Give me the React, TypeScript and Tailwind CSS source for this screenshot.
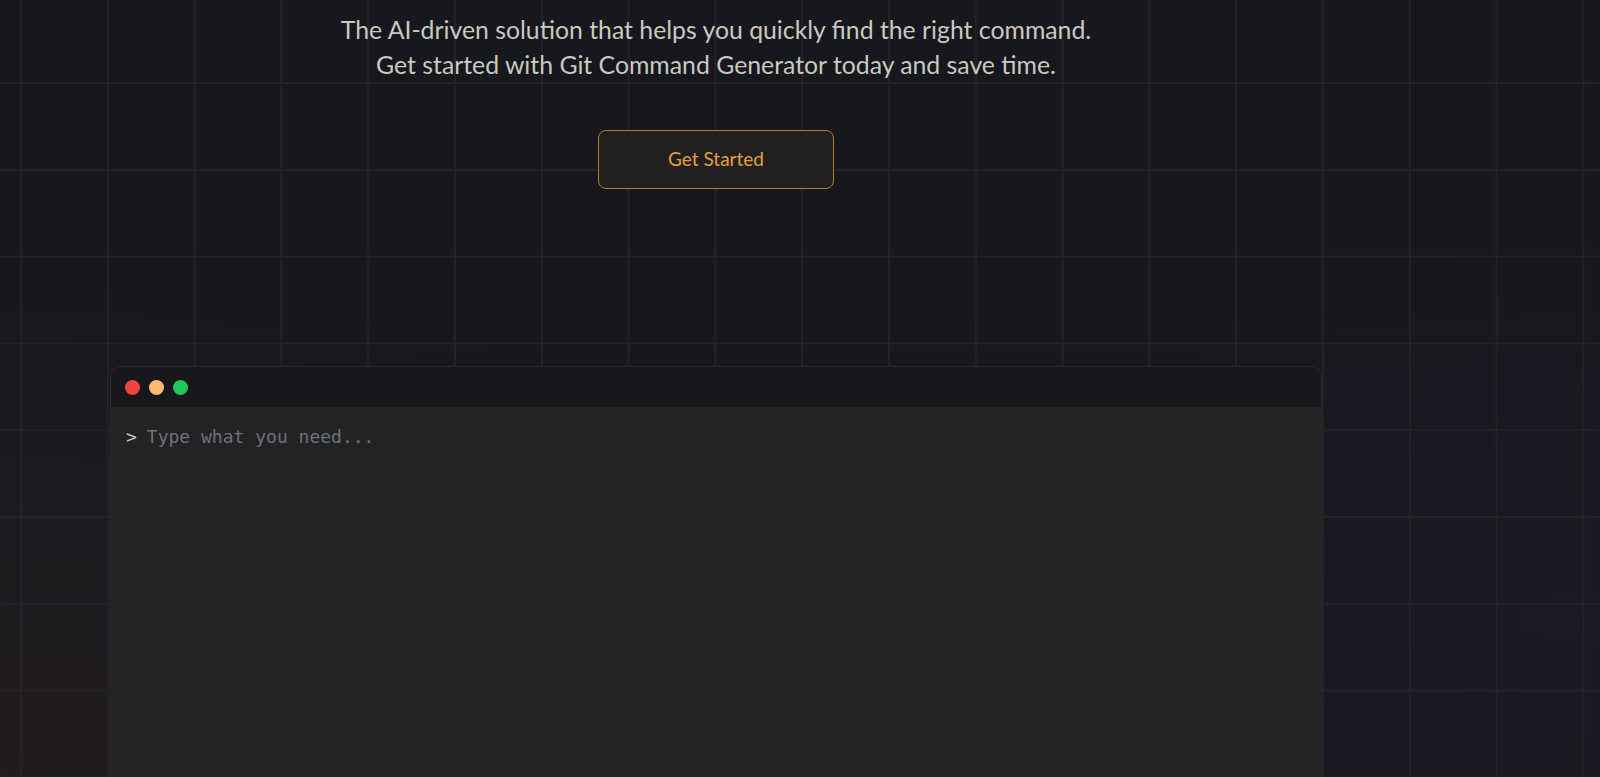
const App = () => {
  return (
    <div className="min-h-screen h-[777px] overflow-hidden bg-[#17181d] bg-[linear-gradient(to_right,#222227_2px,transparent_2px),linear-gradient(to_bottom,#222227_2px,transparent_2px),radial-gradient(ellipse_at_0%_100%,rgba(55,38,32,0.3),transparent_45%),radial-gradient(ellipse_at_100%_80%,rgba(30,35,60,0.22),transparent_45%)] bg-[size:86.8px_86.8px,86.8px_86.8px,100%_100%,100%_100%] bg-[position:20px_82px,20px_82px,0_0,0_0]">
      <div className="ml-[110px] w-[1212px] flex flex-col items-center pt-[12px]">
        <p className="text-center text-[24.8px] leading-[35px] text-[#cac8bf] font-['Lato','Liberation_Sans',sans-serif]">
          The AI-driven solution that helps you quickly find the right command.
          <br />
          Get started with Git Command Generator today and save time.
        </p>

        <button className="mt-[48px] w-[236px] h-[59px] rounded-lg border border-[#b07d2a] bg-[#211f1f] text-[19px] text-[#e5a03a] font-['Lato','Liberation_Sans',sans-serif]">
          Get Started
        </button>

        <div className="mt-[177px] w-full rounded-t-[10px] border border-[#2a2a2e] overflow-hidden">
          <div className="h-[40px] bg-[#18181c] flex items-center gap-[9px] px-[14px]">
            <span className="w-[15px] h-[15px] rounded-full bg-[#ef4444]" />
            <span className="w-[15px] h-[15px] rounded-full bg-[#fdba74]" />
            <span className="w-[15px] h-[15px] rounded-full bg-[#22c55e]" />
          </div>
          <div className="h-[400px] bg-[#232323] px-[15px] pt-[16px] font-['DejaVu_Sans_Mono','Liberation_Mono',monospace] text-[18px] flex items-start gap-[10px]">
            <span className="text-[#c4c4b8]">&gt;</span>
            <input
              className="flex-1 bg-transparent outline-none text-[#c4c4b8] placeholder:text-[#6b7280]"
              placeholder="Type what you need..."
            />
          </div>
        </div>
      </div>
    </div>
  );
};

export default App;
